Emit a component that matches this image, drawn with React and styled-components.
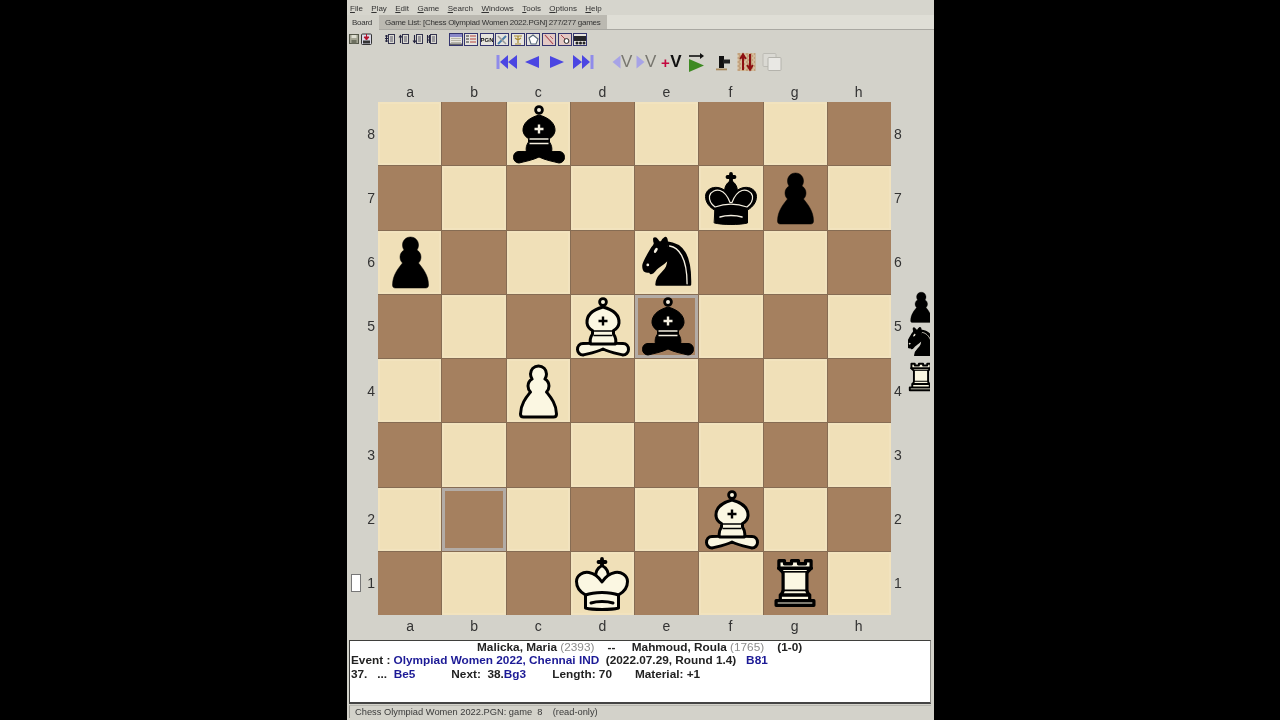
import React from 'react';
import styled, { createGlobalStyle } from 'styled-components';

const Global = createGlobalStyle`
  html, body { margin: 0; padding: 0; background: #000; }
  body { width: 1280px; height: 720px; overflow: hidden; font-family: "Liberation Sans", Arial, sans-serif; }
`;
const Page = styled.div`
  width: 1280px; height: 720px; display: flex; justify-content: center; background: #000;
  padding-left: 1px; box-sizing: border-box;
`;
const Win = styled.div`
  width: 587px; height: 720px; background: #d3d2ca; display: flex; flex-direction: column; overflow: hidden;
  filter: blur(0.3px);
  & > * { flex: none; }
`;
const MenuBar = styled.div`
  height: 15px; display: flex; align-items: center; gap: 8.4px; padding: 1px 0 0 3px; box-sizing: border-box;
  background: #d6d5cd; font-size: 8px; color: #333;
  u { text-decoration-thickness: 0.5px; text-underline-offset: 1px; }
`;
const TabBar = styled.div`
  height: 15px; box-sizing: border-box; display: flex; background: #dfded6; border-bottom: 1px solid #a9a8a2;
`;
const Tab = styled.div`
  font-size: 8px; letter-spacing: -0.27px; display: flex; align-items: center; color: #333; box-sizing: border-box;
  height: ${p => (p.$active ? 15 : 14)}px;
  padding: ${p => (p.$active ? '0 6px 0 5px' : '0 6px')};
  background: ${p => (p.$active ? '#d3d2ca' : '#bbb9b1')};
  width: ${p => (p.$active ? '32px' : 'auto')};
  z-index: ${p => (p.$active ? 1 : 0)};
  white-space: nowrap;
`;
const ToolBar = styled.div`
  height: 18px; display: flex; align-items: center; padding: 0 0 0 2px;
`;
const ToolGroup = styled.div`
  display: flex; align-items: center; gap: ${p => p.$gap}px; margin-left: ${p => p.$ml || 0}px;
`;
const TinyIcon = styled.svg`
  width: ${p => p.$w || 11}px; height: 12px; display: block;
`;
const FrameIcon = styled.svg`
  width: 14px; height: 13px; display: block; background: #e6e4de; outline: 1px solid #34356f; outline-offset: -1px;
`;
const NavBar = styled.div`
  height: 28px; display: flex; align-items: center; padding-left: 149px;
`;
const NavIcon = styled.svg`
  width: ${p => p.$w}px; height: 22px; margin-left: ${p => p.$ml}px; display: block; flex: none;
`;
const VarBtn = styled.span`
  margin-left: ${p => p.$ml}px; display: flex; align-items: center; width: ${p => p.$w}px; height: 22px;
  font-size: 17px; font-weight: ${p => (p.$strong ? 'bold' : 'normal')}; color: ${p => (p.$strong ? '#111' : '#77766f')};
  flex: none; letter-spacing: -0.5px;
`;
const Plus = styled.span` color: #c4083f; font-size: 15px; font-weight: bold; margin-right: 1px; `;
const FileRow = styled.div`
  height: 16px; margin-top: ${p => p.$mt}px; padding-left: 31px; display: grid; grid-template-columns: repeat(8, 64.1px);
  align-items: center; justify-items: center;
  font-size: 14px; color: #333; 
`;
const BoardArea = styled.div`
  display: flex; margin-top: 2px; height: 513px; position: relative;
`;
const RankCol = styled.div`
  width: ${p => p.$w}px; display: grid; grid-template-rows: repeat(8, 1fr); align-items: center; flex: none;
  justify-items: ${p => (p.$right ? 'start' : 'end')};
  padding: ${p => (p.$right ? '0 0 0 3px' : '0 3px 0 0')}; box-sizing: border-box;
  font-size: 14px; color: #333;
`;
const Marker = styled.div`
  position: absolute; left: 4px; bottom: 23px; width: 10px; height: 18px; background: #fff; border: 1px solid #777; box-sizing: border-box;
`;
const Board = styled.div`
  width: 513px; height: 513px; flex: none; display: grid;
  grid-template-columns: repeat(8, 1fr); grid-template-rows: repeat(8, 1fr); gap: 1px;
  background: #866c53;
`;
const Square = styled.div`
  background: ${p => (p.$light ? '#f0e0b8' : '#a5805f')};
  box-shadow: ${p => (p.$mark ? 'inset 0 0 0 3px #b3aca6' : p.$light ? 'inset 0 0 0 2px #f2e3be' : 'none')};
  display: flex; align-items: center; justify-content: center; overflow: visible; min-width: 0; min-height: 0;
`;
const PieceSvg = styled.svg`
  width: 64px; height: 64px; flex: none; display: block;
`;
const Captured = styled.div`
  margin-top: 187px; width: 22px; height: 105px; display: flex; flex-direction: column; overflow: hidden; flex: none;
`;
const CapSlot = styled.div`
  height: 35px; width: 26px; flex: none; display: flex; align-items: center; justify-content: center;
  svg { width: 38px; height: 38px; }
`;
const Info = styled.div`
  margin: 6px 3px 0 2px; height: 64px; box-sizing: border-box; background: #fff; border: 1px solid #3f3f3c; border-right-color: #8d8c86;
  border-bottom: 2px solid #444; padding: 0 0 0 1px; font-size: 11.8px; font-weight: bold; color: #222; line-height: 13.4px;
  white-space: pre;
`;
const InfoLine = styled.div`
  height: 13.4px; padding-left: ${p => p.$pl || 0}px;
`;
const Blue = styled.span` color: #1c1a96; `;
const Gray = styled.span` color: #8c8c8c; font-weight: normal; `;
const Status = styled.div`
  margin: 1px 3px 0 2px; height: 13px; box-sizing: border-box; border-left: 1px solid #9a9992; border-top: 1px solid #b6b5ae;
  padding-left: 5px; font-size: 9.3px; color: #3a3a3a; line-height: 12px; white-space: pre;
`;

const CREAM = '#fbf7e2';
const SNOW = '#f4efe0';
const BODY = 'M32 13C21 16 15.5 22 16 29C16.5 33 19.5 35.5 21.5 36.5L21.5 40C19.5 43 18.5 46 19.5 50L44.5 50C45.5 46 44.5 43 42.5 40L42.5 36.5C44.5 35.5 47.5 33 48 29C48.5 22 43 16 32 13Z';
const BOW = 'M32 47C28 49.5 20 49.5 12 49.5C8.5 49.5 6.5 52 6.5 55.5C6.5 58.5 9 61 12 61C18 59.5 26 58 32 55C38 58 46 59.5 52 61C55 61 57.5 58.5 57.5 55.5C57.5 52 55.5 49.5 52 49.5C44 49.5 36 49.5 32 47Z';
const Bishop = ({ black }) => {
  const f = black ? '#000' : CREAM;
  const ink = black ? SNOW : '#000';
  return (
    <PieceSvg viewBox="-1 0 64 64">
      <g fill={f} stroke="#000" strokeWidth={black ? 1 : 3} strokeLinejoin="round">
        <path d={BOW} />
        <path d={BODY} />
        <circle cx="32" cy="8" r="3.4" fill={black ? SNOW : CREAM} strokeWidth="2.8" />
        <path d="M32 22.5v9M27.5 27h9" fill="none" stroke={ink} strokeWidth="2.4" />
        <path d="M22.5 37h19M22.5 41.5h19" fill="none" stroke={ink} strokeWidth="1.7" />
      </g>
    </PieceSvg>
  );
};
const KBODY = 'M15.5 57C23 59 41 59 48.5 57L48.5 44C54 41 57.5 36 57.5 30.5C57.5 24 51 20.5 45 21.5C39 22.5 35 26.5 32 31C29 26.5 25 22.5 19 21.5C13 20.5 6.5 24 6.5 30.5C6.5 36 10 41 15.5 44Z';
const KBULB = 'M32 14.5C27 17 25 22 26 26L32 35L38 26C39 22 37 17 32 14.5Z';
const King = ({ black }) => {
  const f = black ? '#000' : CREAM;
  return (
    <PieceSvg viewBox="0 0 64 64">
      <g fill="none" stroke="#000" strokeWidth={black ? 1 : 3} strokeLinejoin="round" strokeLinecap="round">
        <path d="M32 8v7M28.5 11h7" strokeWidth="3.8" />
        <path d={KBULB} fill={f} />
        <path d={KBODY} fill={f} />
        {black ? (
          <>
            <path d="M16 41C12 38 10 34 10.5 30C12 25 17 23.5 21 24.5C25.5 26 29 31 31 36.5L33 36.5C35 31 38.5 26 43 24.5C47 23.5 52 25 53.5 30C54 34 52 38 48 41C38 37.5 26 37.5 16 41Z" stroke={SNOW} strokeWidth="1.2" />
            <path d="M21 51C27 49 37 49 43 51" stroke={SNOW} strokeWidth="1.6" />
          </>
        ) : (
          <>
            <path d="M15.5 44C24 40.5 40 40.5 48.5 44" />
            <path d="M21 52C27 50 37 50 43 52" />
          </>
        )}
      </g>
    </PieceSvg>
  );
};
const PAWN = 'M32 7C27.5 7 24 10.5 24 15C24 17 24.6 18.6 25.6 20C23 21.5 21.5 24 21.5 27C21.5 29.5 22.5 31.5 24 33C20 38 14 45 14 55C14 57 15 58 17 58L47 58C49 58 50 57 50 55C50 45 44 38 40 33C41.5 31.5 42.5 29.5 42.5 27C42.5 24 41 21.5 38.4 20C39.4 18.6 40 17 40 15C40 10.5 36.5 7 32 7Z';
const Pawn = ({ black }) => (
  <PieceSvg viewBox="-0.5 0 64 64">
    <path d={PAWN} fill={black ? '#000' : CREAM} stroke="#000" strokeWidth={black ? 0.5 : 3} strokeLinejoin="round" />
  </PieceSvg>
);
const Rook = () => (
  <PieceSvg viewBox="-0.35 2.4 45.7 43.2" preserveAspectRatio="none">
    <g fill={CREAM} stroke="#000" strokeWidth="2.3" strokeLinecap="round" strokeLinejoin="round">
      <path d="M9 39h27v-3H9v3zM12 36v-4h21v4H12zM11 14V9h4v2h5V9h5v2h5V9h4v5" />
      <path d="M34 14l-3 3H14l-3-3" />
      <path d="M31 17v12.5H14V17" />
      <path d="M31 29.5l1.5 2.5h-20l1.5-2.5" />
      <path d="M11 14h23" fill="none" />
    </g>
  </PieceSvg>
);
const Knight = () => (
  <PieceSvg viewBox="0.2 1.5 44 44">
    <g stroke="#000" strokeWidth="1.7" strokeLinecap="round" strokeLinejoin="round">
      <path d="M22 10c10.5 1 16.5 8 16 29H15c0-9 10-6.5 8-21" fill="#000" />
      <path d="M24 18c.38 2.91-5.55 7.37-8 9-3 2-2.82 4.34-5 4-1.042-.94 1.41-3.04 0-3-1 0 .19 1.23-1 2-1 0-4.003 1-4-4 0-2 6-12 6-12s1.89-1.9 2-3.5c-.73-.994-.5-2-.5-3 1-1 3 2.5 3 2.5h2s.78-1.992 2.5-3c1 0 1 3 1 3" fill="#000" />
      <path d="M9.5 25.5a.5.5 0 1 1-1 0 .5.5 0 1 1 1 0zm5.433-9.75a.5 1.5 30 1 1-.866-.5.5 1.5 30 1 1 .866.5z" fill={SNOW} stroke={SNOW} strokeWidth="0.9" />
      <path d="M24 12.5C30 13.5 36 20 36 38.5" fill="none" stroke={SNOW} strokeWidth="0.9" />
    </g>
  </PieceSvg>
);

const PIECES = {
  c8: <Bishop black />, f7: <King black />, g7: <Pawn black />, a6: <Pawn black />, e6: <Knight />,
  d5: <Bishop />, e5: <Bishop black />, c4: <Pawn />, f2: <Bishop />, d1: <King />, g1: <Rook />,
};
const FILES = ['a', 'b', 'c', 'd', 'e', 'f', 'g', 'h'];
const RANKS = [8, 7, 6, 5, 4, 3, 2, 1];
const MARKS = ['e5', 'b2'];

const MENUS = [['F', 'ile'], ['P', 'lay'], ['E', 'dit'], ['G', 'ame'], ['S', 'earch'], ['W', 'indows'], ['T', 'ools'], ['O', 'ptions'], ['H', 'elp']];

const ListIcon = ({ mark }) => (
  <TinyIcon $w={11} viewBox="0 0 11 12">
    <rect x="4.5" y="1.5" width="6" height="9" fill="#dcdbd3" stroke="#35354f" strokeWidth="1" />
    <path d="M6 4h3M6 6h3M6 8h3" stroke="#35354f" strokeWidth="0.8" />
    <path d={mark} stroke="#23233f" strokeWidth="1.1" fill="none" />
  </TinyIcon>
);
const FRAMES = [
  <g key="0"><rect x="1" y="1" width="12" height="3" fill="#8a89c8" /><path d="M2 5.5h10M2 7.5h10M2 9.5h10" stroke="#b8b6a8" /><rect x="1" y="10.5" width="12" height="1.6" fill="#666" /></g>,
  <g key="1"><path d="M2 3h3M2 6h3M2 9h3" stroke="#333" /><path d="M6 3h6M6 6h6M6 9h6" stroke="#b5433c" /></g>,
  <text key="2" x="7" y="9" fontSize="6" fontWeight="bold" textAnchor="middle" fill="#111" fontFamily="Liberation Sans" textLength="13" lengthAdjust="spacingAndGlyphs">PGN</text>,
  <g key="3"><path d="M3 11l8-8" stroke="#4b7ea8" strokeWidth="2" /><path d="M3 3l8 8" stroke="#9a9a9a" strokeWidth="1.6" /></g>,
  <g key="4"><path d="M3 3h8M7 3v7M4 11h6M4 5l3 2 3-2" stroke="#a88a30" strokeWidth="1.2" fill="none" /></g>,
  <g key="5"><path d="M3 5l4-3 5 4-2 5H5z" fill="#fff" stroke="#55677a" strokeWidth="1.1" /></g>,
  <g key="6"><rect x="1" y="1" width="12" height="11" fill="#e3c9c4" /><path d="M3 2l8 9" stroke="#a9434c" strokeWidth="1.1" /><path d="M8 3l3 3" stroke="#a9434c" strokeWidth="0.8" /></g>,
  <g key="7"><rect x="1" y="1" width="12" height="11" fill="#e3c9c4" /><circle cx="8.5" cy="8" r="2.4" fill="#fff" stroke="#222" strokeWidth="1" /><path d="M3 2l4 4" stroke="#a9434c" /></g>,
  <g key="8"><rect x="1" y="3" width="12" height="5" fill="#26262a" /><circle cx="4" cy="10" r="1.5" fill="#222" /><circle cx="7.5" cy="10" r="1.5" fill="#222" /><circle cx="11" cy="10" r="1.5" fill="#222" /></g>,
];

const Piece = ({ id }) => PIECES[id] || null;

export default function App() {
  return (
    <Page>
      <Global />
      <Win>
        <MenuBar>
          {MENUS.map(([a, b]) => <span key={a}><u>{a}</u>{b}</span>)}
        </MenuBar>
        <TabBar>
          <Tab $active>Board</Tab>
          <Tab>Game List: [Chess Olympiad Women 2022.PGN] 277/277 games</Tab>
        </TabBar>
        <ToolBar>
          <ToolGroup $gap={2}>
            <TinyIcon $w={10} viewBox="0 0 10 12">
              <rect x="0.5" y="1.5" width="9" height="9" fill="#a4a594" stroke="#55584a" />
              <rect x="2.5" y="2" width="5" height="3" fill="#dedfd2" /><rect x="2.5" y="7" width="5" height="3.5" fill="#6d7060" />
            </TinyIcon>
            <TinyIcon $w={11} viewBox="0 0 11 12">
              <rect x="0.5" y="1" width="10" height="10.5" rx="1" fill="#d9d9e6" stroke="#333" />
              <path d="M5.5 1v4M3 4l2.5 3L8 4z" stroke="#b5122a" fill="#b5122a" />
              <rect x="2" y="7.5" width="7" height="3" fill="#333" />
            </TinyIcon>
          </ToolGroup>
          <ToolGroup $gap={3} $ml={12}>
            <ListIcon mark="M1 3h3M1 5.5h3M1 8h3M2.5 2v7" />
            <ListIcon mark="M2.5 10V3M1 4.5l1.5-2 1.5 2" />
            <ListIcon mark="M2.5 2v7M1 7.5l1.5 2 1.5-2" />
            <ListIcon mark="M1 4h3M1 7h3M1.5 2v8M3.5 2v8" />
          </ToolGroup>
          <ToolGroup $gap={1.6} $ml={11.5}>
            {FRAMES.map((f, i) => <FrameIcon key={i} viewBox="0 0 14 13">{f}</FrameIcon>)}
          </ToolGroup>
        </ToolBar>
        <NavBar>
          <NavIcon $w={22} $ml={0} viewBox="0 0 22 22">
            <rect x="0.5" y="4" width="3" height="14" fill="#8f8bea" />
            <path d="M12 4v14L4 11zM21 4v14l-9-7z" fill="#4b46e2" />
          </NavIcon>
          <NavIcon $w={16} $ml={6} viewBox="0 0 16 22"><path d="M15 5v12L1 11z" fill="#4b46e2" /></NavIcon>
          <NavIcon $w={16} $ml={9} viewBox="0 0 16 22"><path d="M1 5v12l14-6z" fill="#4b46e2" /></NavIcon>
          <NavIcon $w={22} $ml={7} viewBox="0 0 22 22">
            <rect x="18.5" y="4" width="3" height="14" fill="#8f8bea" />
            <path d="M1 4v14l9-7zM10 4v14l8-7z" fill="#4b46e2" />
          </NavIcon>
          <NavIcon $w={9} $ml={18} viewBox="0 0 9 22"><path d="M8.5 4.5v13L0.5 11z" fill="#a7a3e6" /></NavIcon>
          <VarBtn $w={12} $ml={0}>V</VarBtn>
          <NavIcon $w={9} $ml={3} viewBox="0 0 9 22"><path d="M0.5 4.5v13l8-6.5z" fill="#a7a3e6" /></NavIcon>
          <VarBtn $w={12} $ml={0}>V</VarBtn>
          <VarBtn $w={23} $ml={4} $strong><Plus>+</Plus>V</VarBtn>
          <NavIcon $w={17} $ml={4} viewBox="0 0 17 22">
            <path d="M1 5h12" stroke="#111" strokeWidth="1.6" /><path d="M12 2l4 3-4 3z" fill="#111" />
            <path d="M1 8v13l15-6.5z" fill="#3d8a22" />
          </NavIcon>
          <NavIcon $w={16} $ml={10} viewBox="0 0 16 22">
            <rect x="4" y="5" width="5" height="12" fill="#111" /><rect x="8" y="8.5" width="7" height="4" fill="#222" />
            <rect x="1" y="17.5" width="11" height="1.8" fill="#a8895c" />
          </NavIcon>
          <NavIcon $w={19} $ml={6} viewBox="0 0 19 22">
            <rect x="0.5" y="2" width="18" height="18" fill="#c3a27d" />
            <path d="M0 5h19M0 9h19M0 13h19M0 17h19M4 2v18M8 2v18M12 2v18M16 2v18" stroke="#ede3cc" strokeWidth="0.8" strokeDasharray="2 2" />
            <path d="M6 19V5M3.2 8L6 3.5 8.8 8M13 3v14M10.2 14l2.8 4.5 2.8-4.5" stroke="#8d0f12" strokeWidth="2" fill="none" />
          </NavIcon>
          <NavIcon $w={20} $ml={6} viewBox="0 0 20 22">
            <rect x="1" y="2.5" width="13" height="13" rx="1" fill="#dad9d3" stroke="#bcbbb4" />
            <rect x="6" y="6.5" width="13" height="13" rx="1" fill="#e9e8e4" stroke="#b4b3ac" />
          </NavIcon>
        </NavBar>
        <FileRow $mt={8}>{FILES.map(f => <span key={f}>{f}</span>)}</FileRow>
        <BoardArea>
          <RankCol $w={31}>{RANKS.map(r => <span key={r}>{r}</span>)}</RankCol>
          <Marker />
          <Board>
            {RANKS.map((r, ri) => FILES.map((f, fi) => {
              const id = f + r;
              return (
                <Square key={id} $light={(ri + fi) % 2 === 0} $mark={MARKS.includes(id)}>
                  <Piece id={id} />
                </Square>
              );
            }))}
          </Board>
          <RankCol $w={17} $right>{RANKS.map(r => <span key={r}>{r}</span>)}</RankCol>
          <Captured>
            <CapSlot><Pawn black /></CapSlot>
            <CapSlot><Knight /></CapSlot>
            <CapSlot><Rook /></CapSlot>
          </Captured>
        </BoardArea>
        <FileRow $mt={3}>{FILES.map(f => <span key={f}>{f}</span>)}</FileRow>
        <Info>
          <InfoLine $pl={126}>Malicka, Maria <Gray>(2393)</Gray>    --     Mahmoud, Roula <Gray>(1765)</Gray>    (1-0)</InfoLine>
          <InfoLine>Event : <Blue>Olympiad Women 2022, Chennai IND</Blue>  (2022.07.29, Round 1.4)   <Blue>B81</Blue></InfoLine>
          <InfoLine>37.   ...  <Blue>Be5</Blue>           Next:  38.<Blue>Bg3</Blue>        Length: 70       Material: +1</InfoLine>
        </Info>
        <Status>Chess Olympiad Women 2022.PGN: game  8    (read-only)</Status>
      </Win>
    </Page>
  );
}
